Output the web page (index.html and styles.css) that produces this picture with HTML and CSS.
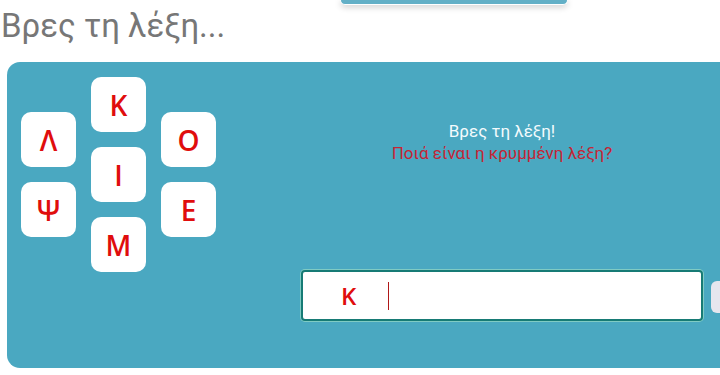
FILE: index.html
```html
<!DOCTYPE html>
<html lang="el">
  <head>
    <meta charset="UTF-8" />
    <meta name="viewport" content="width=device-width, initial-scale=1.0" />
    <title>Βρες τη λέξη</title>
    <link rel="stylesheet" href="styles.css">
  </head>
  <body>
    <div class="topbar"></div>
    <h1 class="title">Βρες τη λέξη...</h1>

    <div class="panel">
      <div class="tiles">
        <div class="col col-side">
          <div class="tile">Λ</div>
          <div class="tile">Ψ</div>
        </div>
        <div class="col">
          <div class="tile">K</div>
          <div class="tile">I</div>
          <div class="tile">M</div>
        </div>
        <div class="col col-side">
          <div class="tile">O</div>
          <div class="tile">E</div>
        </div>
      </div>

      <div class="game">
        <div class="msg">
          <p class="msg-title">Βρες τη λέξη!</p>
          <p class="msg-question">Ποιά είναι η κρυμμένη λέξη?</p>
        </div>
        <div class="answer-row">
          <div class="answer">
            <span class="answer-text">K</span>
            <span class="caret"></span>
          </div>
          <button class="check"></button>
        </div>
      </div>
    </div>
  </body>
</html>
```

FILE: styles.css
```css
* {
  padding: 0;
  margin: 0;
  box-sizing: border-box;
}
html,
body {
  overflow: hidden;
}
body {
  font-family: Roboto, "Noto Sans", sans-serif;
  background: #fff;
  width: 720px;
  height: 375px;
}
.topbar {
  width: 228px;
  height: 5px;
  margin-left: 340px;
  background: #63b0c7;
  border: 1px solid #fff;
  border-top: none;
  border-radius: 0 0 7px 7px;
  box-shadow: 0 2px 6px rgba(0, 0, 0, 0.22);
}
.title {
  font-size: 33px;
  font-weight: 400;
  color: #777;
  margin-top: 1px;
  margin-left: 1px;
  line-height: 39px;
}
.panel {
  margin-top: 17px;
  margin-left: 7px;
  width: 740px;
  height: 306px;
  background: #4aa8c1;
  border-radius: 13px;
  display: flex;
  padding: 15px 0 0 14px;
}
.tiles {
  display: flex;
  gap: 15px;
}
.col {
  display: flex;
  flex-direction: column;
  gap: 15px;
}
.col-side {
  margin-top: 35px;
}
.tile {
  width: 55px;
  height: 55px;
  background: #fff;
  border-radius: 10px;
  display: flex;
  align-items: center;
  justify-content: center;
  font-family: "Open Sans", "Noto Sans", sans-serif;
  font-size: 28px;
  font-weight: 600;
  color: #e00d0d;
}
.game {
  margin-left: 85px;
  width: 402px;
  display: flex;
  flex-direction: column;
}
.msg {
  margin-top: 43px;
  text-align: center;
  font-size: 17px;
  font-weight: 400;
  line-height: 22px;
}
.msg-title {
  color: #f4fbfd;
}
.msg-question {
  color: #c62434;
}
.answer-row {
  margin-top: 106px;
  display: flex;
  align-items: center;
  gap: 8px;
}
.answer {
  flex: none;
  width: 402px;
  height: 51px;
  background: #fff;
  border: 2px solid #177b75;
  border-radius: 4px;
  box-shadow: 0 0 0 1px #7fcbc4;
  display: flex;
  align-items: center;
  padding-left: 38px;
}
.answer-text {
  font-family: "Open Sans", "Noto Sans", sans-serif;
  font-size: 24px;
  font-weight: 600;
  color: #e00d0d;
}
.caret {
  width: 1px;
  height: 28px;
  margin-left: 32px;
  background: #b01818;
}
.check {
  flex: none;
  width: 40px;
  height: 32px;
  margin-top: 2px;
  background: #e6e6ee;
  border: none;
  border-radius: 6px;
}
```
